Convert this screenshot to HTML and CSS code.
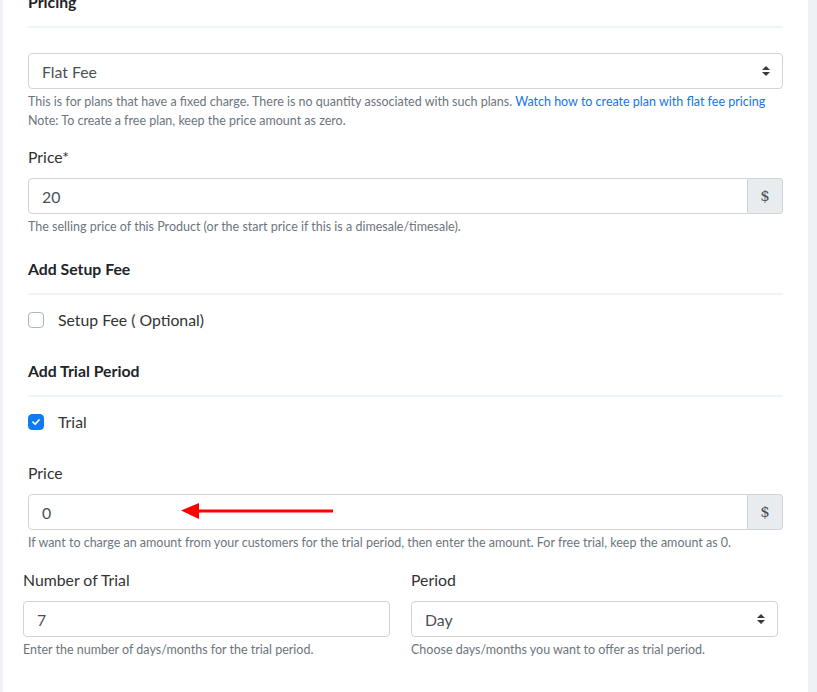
FILE: index.html
```html
<!DOCTYPE html>
<html lang="en">
<head>
    <meta charset="UTF-8">
    <meta name="viewport" content="width=device-width, initial-scale=1.0">
    <title>Pricing</title>
    <link rel="stylesheet" href="styles.css">
</head>
<body>
    <div class="panel">
        <h4 class="section-title first">Pricing</h4>

        <div class="form-group">
            <div class="select-box">
                <span>Flat Fee</span>
                <svg width="10" height="14" viewBox="0 0 10 14"><path d="M1 6 L5 2 L9 6 Z M1 8 L5 12 L9 8 Z" fill="#343a40"/></svg>
            </div>
            <p class="help">This is for plans that have a fixed charge. There is no quantity associated with such plans. <a href="#">Watch how to create plan with flat fee pricing</a><br>Note: To create a free plan, keep the price amount as zero.</p>
        </div>

        <div class="form-group">
            <label class="field-label">Price*</label>
            <div class="input-group">
                <div class="input">20</div>
                <div class="addon">$</div>
            </div>
            <p class="help">The selling price of this Product (or the start price if this is a dimesale/timesale).</p>
        </div>

        <h4 class="section-title">Add Setup Fee</h4>
        <div class="check-row">
            <span class="checkbox"></span>
            <span>Setup Fee ( Optional)</span>
        </div>

        <h4 class="section-title">Add Trial Period</h4>
        <div class="check-row">
            <span class="checkbox checked">
                <svg width="10" height="10" viewBox="0 0 10 10"><path d="M2 5.2 L4.2 7.2 L8 3" fill="none" stroke="#fff" stroke-width="1.8" stroke-linecap="round" stroke-linejoin="round"/></svg>
            </span>
            <span>Trial</span>
        </div>

        <div class="form-group trial-price">
            <label class="field-label">Price</label>
            <div class="input-group">
                <div class="input">0</div>
                <div class="addon">$</div>
                <svg class="arrow" width="156" height="18" viewBox="0 0 156 18"><path d="M17 9 L152 9" stroke="#f00" stroke-width="3"/><path d="M0 8.5 L18 1 L18 17 Z" fill="#f00"/></svg>
            </div>
            <p class="help">If want to charge an amount from your customers for the trial period, then enter the amount. For free trial, keep the amount as 0.</p>
        </div>

        <div class="row">
            <div class="col">
                <label class="field-label">Number of Trial</label>
                <div class="input">7</div>
                <p class="help">Enter the number of days/months for the trial period.</p>
            </div>
            <div class="col">
                <label class="field-label">Period</label>
                <div class="select-box">
                    <span>Day</span>
                    <svg width="10" height="14" viewBox="0 0 10 14"><path d="M1 6 L5 2 L9 6 Z M1 8 L5 12 L9 8 Z" fill="#343a40"/></svg>
                </div>
                <p class="help">Choose days/months you want to offer as trial period.</p>
            </div>
        </div>

        <div class="row next-row">
            <div class="col">
                <label class="field-label">Billing Cycles</label>
            </div>
        </div>
    </div>
</body>
</html>
```

FILE: styles.css
```css
body {
    margin: 0;
    background-color: #eef2f7;
    font-family: Lato, "Open Sans", sans-serif;
    color: #333;
    overflow: hidden;
}

.panel {
    margin: 0 9px 0 3px;
    padding: 0 25px;
    background-color: #ffffff;
    height: 720px;
}

.section-title {
    margin: 23px 0 0;
    padding-bottom: 14px;
    border-bottom: 2px solid #eef4fb;
    font-size: 15.8px;
    line-height: 20px;
    font-weight: 700;
    color: #212529;
}

.section-title.first {
    margin-top: -8px;
}

.form-group {
    margin-top: 17px;
}

.section-title.first + .form-group {
    margin-top: 25px;
}

.field-label {
    display: block;
    font-size: 15.8px;
    line-height: 20px;
    margin-bottom: 11px;
    color: #333;
}

.select-box,
.input {
    box-sizing: border-box;
    height: 36px;
    display: flex;
    align-items: center;
    justify-content: space-between;
    padding: 0 13px;
    border: 1px solid #ced4da;
    border-radius: 4px;
    font-size: 15.8px;
    color: #495057;
    background: #fff;
}

.select-box svg {
    margin-right: -2px;
}

.input-group {
    position: relative;
    display: flex;
}

.input-group .input {
    flex: 1;
    border-radius: 4px 0 0 4px;
}

.addon {
    box-sizing: border-box;
    width: 35px;
    height: 36px;
    display: flex;
    align-items: center;
    justify-content: center;
    border: 1px solid #ced4da;
    border-left: none;
    border-radius: 0 4px 4px 0;
    background-color: #e9ecef;
    color: #495057;
    font-family: "DejaVu Serif", serif;
    font-size: 15px;
}

.arrow {
    position: absolute;
    left: 153px;
    top: 8px;
}

.help {
    margin: 3px 0 0;
    font-size: 12.5px;
    line-height: 19px;
    color: #6c757d;
}

.help a {
    color: #1a73e8;
    text-decoration: none;
}

.check-row {
    display: flex;
    align-items: center;
    gap: 14px;
    margin-top: 15px;
    font-size: 15.8px;
    line-height: 20px;
    color: #333;
}

.checkbox {
    box-sizing: border-box;
    width: 16px;
    height: 16px;
    border: 1px solid #adb5bd;
    border-radius: 4px;
    display: flex;
    align-items: center;
    justify-content: center;
}

.checkbox.checked {
    background-color: #0d7bf2;
    border-color: #0d7bf2;
}

.check-row + .section-title {
    margin-top: 31px;
}

.trial-price {
    margin-top: 31px;
}

.row {
    display: grid;
    grid-template-columns: 1fr 1fr;
    column-gap: 21px;
    margin: 18px 5px 0 -5px;
}

.row.next-row {
    margin-top: 30px;
}
```
